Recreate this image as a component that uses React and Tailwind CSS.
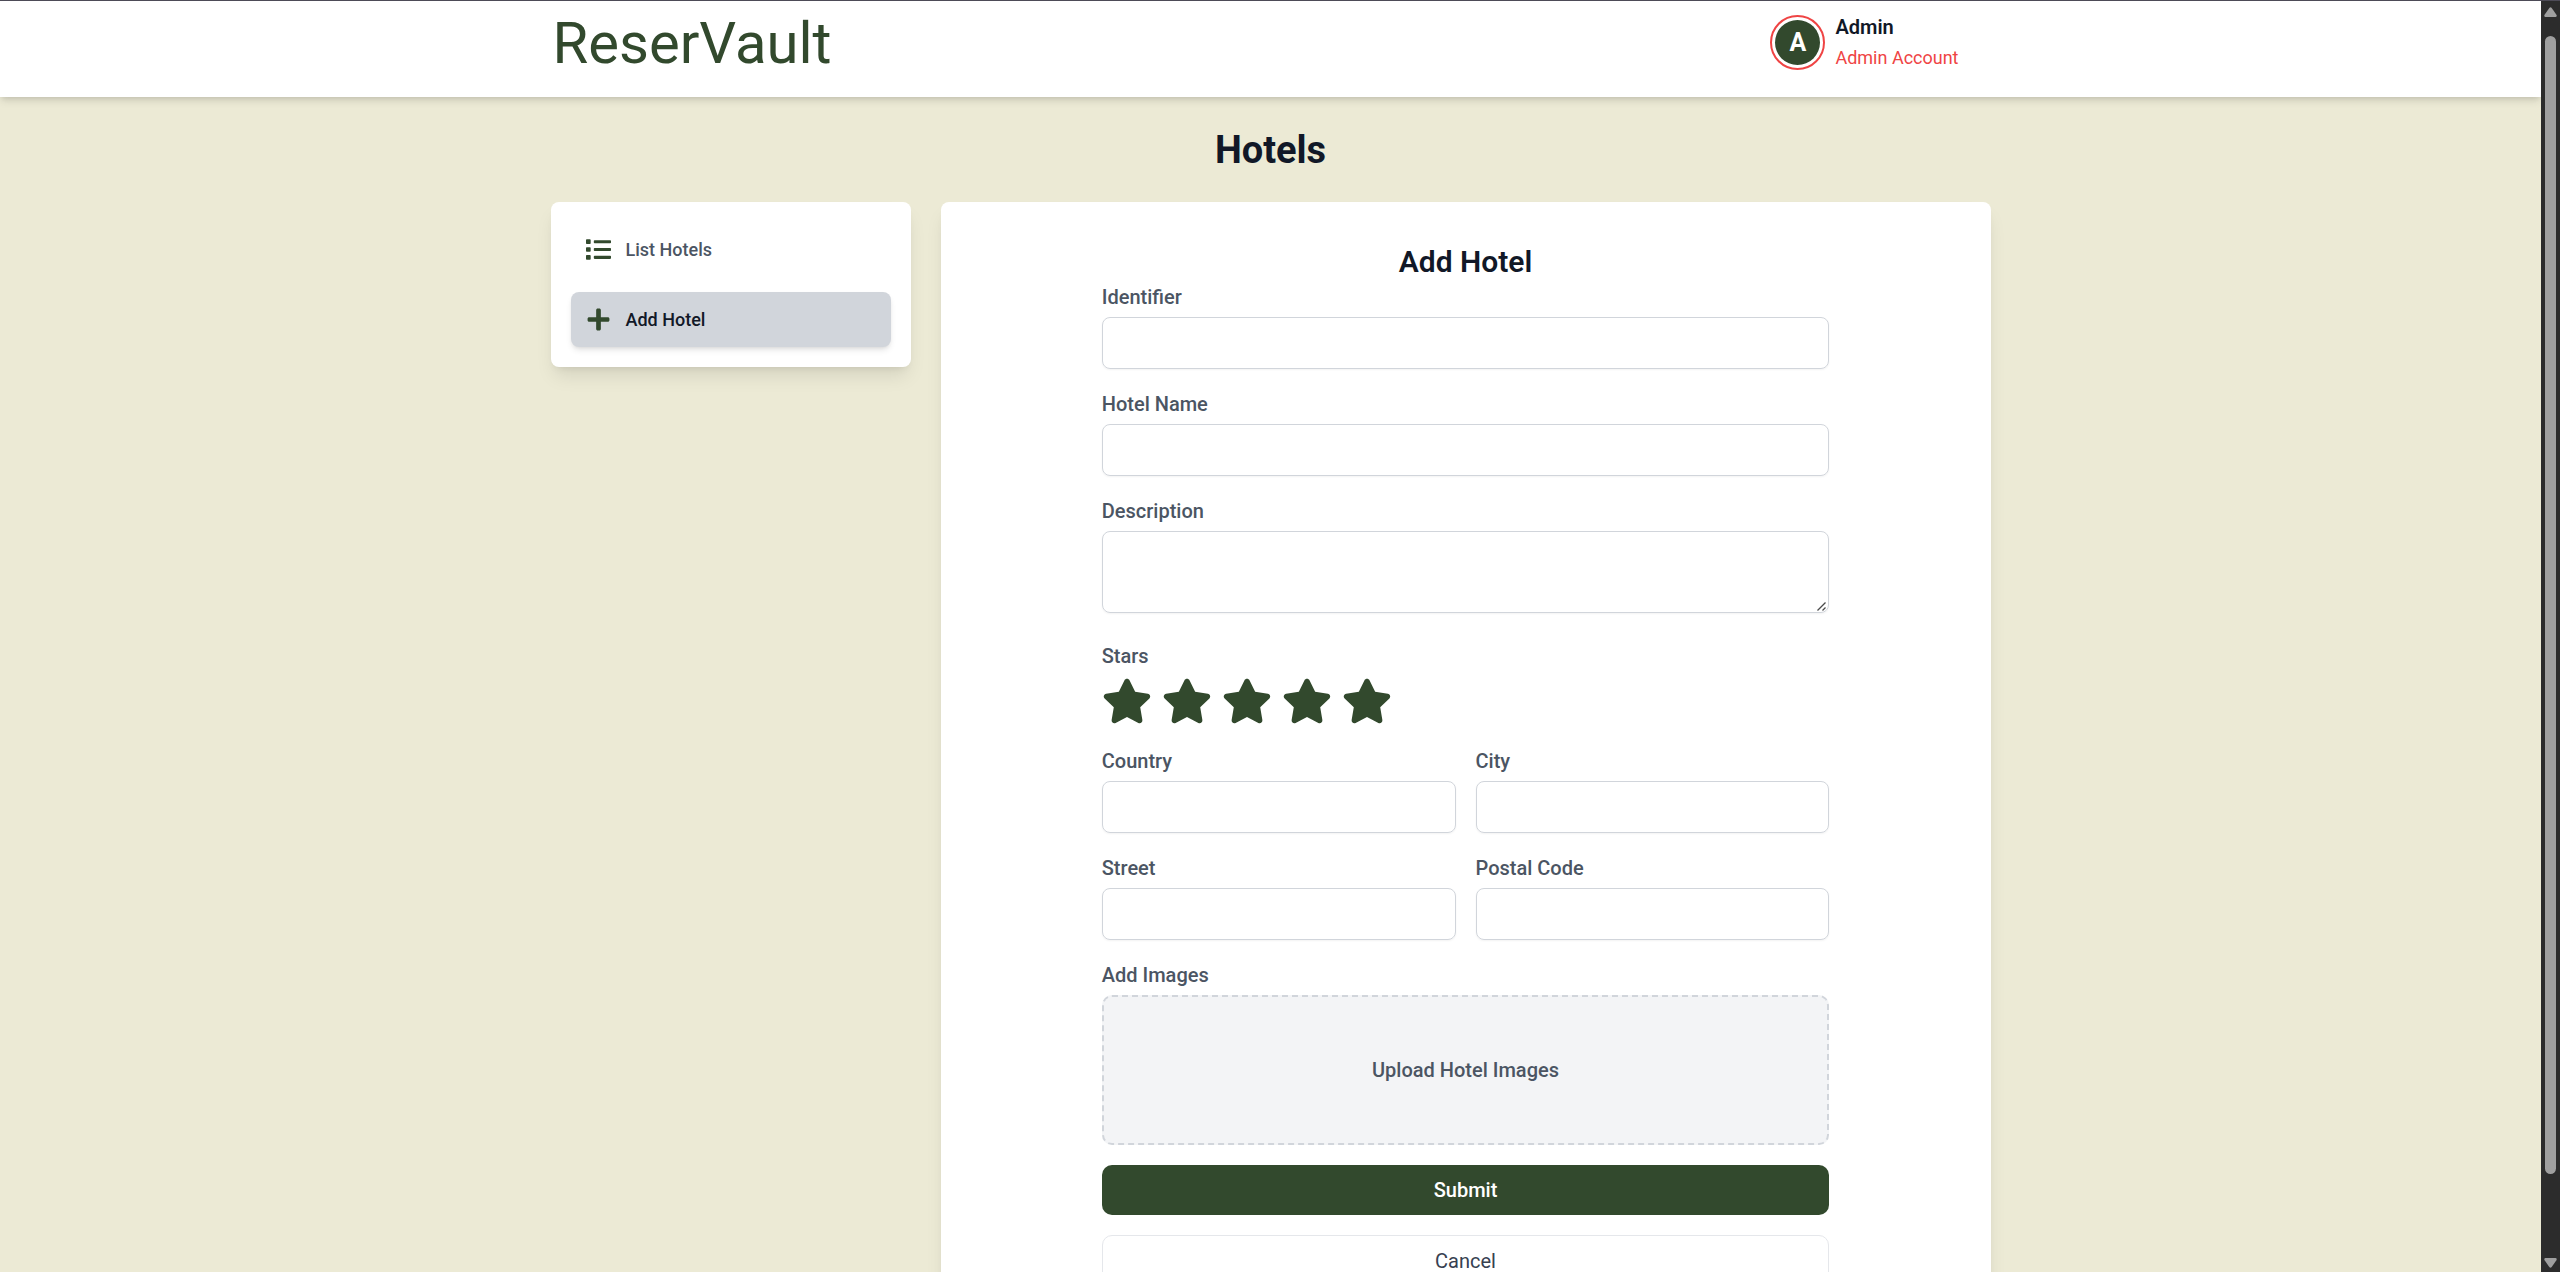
import { useState } from "react";
import { FaList, FaPlus, FaStar } from "react-icons/fa";

function Header() {
  return (
    <header className="relative bg-white shadow-[0_5px_8px_-1px_rgba(0,0,0,0.1),0_3px_5px_-2px_rgba(0,0,0,0.1)]">
      <div className="mx-auto flex max-w-[1440px] items-center justify-between pt-[3px] pb-4">
        <a href="#home" className="pt-0.5 pl-0.5 text-[58px] leading-[75px] text-[#32492d]">
          ReserVault
        </a>
        <button type="button" className="flex items-center gap-2.5 pr-8 text-left">
          <span className="rounded-full border-2 border-[#ef4444] p-[3px]">
            <span className="flex size-[45px] items-center justify-center rounded-full bg-[#32492d] text-[25px] font-bold text-white">
              A
            </span>
          </span>
          <span className="flex flex-col">
            <span className="text-[20px] leading-[30px] font-semibold text-[#111827]">Admin</span>
            <span className="text-[18px] leading-[32px] text-[#ef4444]">Admin Account</span>
          </span>
        </button>
      </div>
    </header>
  );
}

function Sidebar() {
  return (
    <nav className="flex w-1/4 shrink-0 flex-col gap-[15px] rounded-lg bg-white p-5 text-[18px] leading-[25px] font-medium shadow-[0_12px_19px_-4px_rgba(0,0,0,0.1),0_5px_8px_-5px_rgba(0,0,0,0.1)]">
      <a href="#list" className="flex items-center gap-[15px] rounded-lg p-[15px] text-[#4b5563]">
        <FaList className="size-[25px] text-[#32492d]" />
        List Hotels
      </a>
      <a
        href="#add"
        aria-current="page"
        className="flex items-center gap-[15px] rounded-lg bg-[#d1d5db] p-[15px] text-[#111827] shadow-md"
      >
        <FaPlus className="size-[25px] text-[#32492d]" />
        Add Hotel
      </a>
    </nav>
  );
}

function Field({ id, label, multiline }) {
  return (
    <div>
      <label htmlFor={id} className="mb-[5px] block">
        {label}
      </label>
      {multiline ? (
        <div className="relative mb-2">
          <textarea
            id={id}
            className="block h-[82px] w-full resize-none rounded-lg border border-[#d1d5db] px-4 py-2.5 shadow-xs"
          />
          <svg
            viewBox="0 0 9 9"
            className="pointer-events-none absolute right-[3px] bottom-0.5 size-[9px]"
            fill="none"
            stroke="#4a4a4a"
            strokeWidth="1.3"
            aria-hidden="true"
          >
            <path d="M0.5 8.5 L8.5 0.5 M5.5 8.5 L8.5 5.5" />
          </svg>
        </div>
      ) : (
        <input
          id={id}
          type="text"
          className="block h-[52px] w-full rounded-lg border border-[#d1d5db] px-4 shadow-xs"
        />
      )}
    </div>
  );
}

function Stars() {
  const [rating, setRating] = useState(5);
  return (
    <fieldset>
      <legend className="mb-[5px]">Stars</legend>
      <div className="flex gap-2.5">
        {[1, 2, 3, 4, 5].map((n) => (
          <button key={n} type="button" aria-label={`${n} stars`} onClick={() => setRating(n)}>
            <FaStar className={n <= rating ? "size-[50px] text-[#32492d]" : "size-[50px] text-[#d1d5db]"} />
          </button>
        ))}
      </div>
    </fieldset>
  );
}

function HotelForm() {
  return (
    <form className="mx-auto flex w-3/4 flex-col gap-5 text-[20px] leading-[30px] font-medium text-[#4b5563]">
      <Field id="identifier" label="Identifier" />
      <Field id="name" label="Hotel Name" />
      <Field id="description" label="Description" multiline />
      <Stars />
      <div className="grid grid-cols-2 gap-5">
        <Field id="country" label="Country" />
        <Field id="city" label="City" />
        <Field id="street" label="Street" />
        <Field id="postal" label="Postal Code" />
      </div>
      <div>
        <p className="mb-[5px]">Add Images</p>
        <label className="flex h-[150px] cursor-pointer items-center justify-center rounded-[10px] border-2 border-dashed border-[#d1d5db] bg-[#f3f4f6]">
          Upload Hotel Images
          <input type="file" multiple className="sr-only" />
        </label>
      </div>
      <button type="submit" className="h-[50px] rounded-[10px] bg-[#32492d] text-white">
        Submit
      </button>
      <button type="button" className="h-[52px] rounded-[10px] border border-[#e5e7eb] bg-white font-normal text-[#374151]">
        Cancel
      </button>
    </form>
  );
}

function ScrollTrack() {
  return (
    <div className="flex w-[19px] shrink-0 flex-col items-center justify-between bg-[#2c2c2c] pt-1.5 pb-1 text-[#9f9f9f]">
      <svg viewBox="0 0 13 10" className="h-2.5 w-[13px] shrink-0" fill="currentColor" aria-hidden="true">
        <path d="M5.3 1 Q6.5 -0.6 7.7 1 L12.6 8 Q13 10 11.5 10 H1.5 Q0 10 0.4 8 Z" />
      </svg>
      <div className="mt-[19px] mb-[84px] w-[11px] flex-1 rounded-full bg-[#9f9f9f]" />
      <svg viewBox="0 0 13 10" className="h-2.5 w-[13px] shrink-0 rotate-180" fill="currentColor" aria-hidden="true">
        <path d="M5.3 1 Q6.5 -0.6 7.7 1 L12.6 8 Q13 10 11.5 10 H1.5 Q0 10 0.4 8 Z" />
      </svg>
    </div>
  );
}

export default function App() {
  return (
    <div className="flex h-screen overflow-hidden border-t border-[#4d4b57] font-['Roboto',sans-serif]">
      <div className="flex-1 overflow-hidden bg-[#ecead5]">
        <Header />
        <main className="mx-auto max-w-[1440px] py-[30px]">
          <h1 className="mb-7 text-center text-[38px] leading-[47px] font-bold text-[#111827]">Hotels</h1>
          <div className="flex items-start gap-[30px]">
            <Sidebar />
            <section className="flex-1 rounded-lg bg-white p-10 shadow-[0_12px_19px_-4px_rgba(0,0,0,0.1),0_5px_8px_-5px_rgba(0,0,0,0.1)]">
              <h2 className="text-center text-[30px] leading-[40px] font-semibold text-[#111827]">Add Hotel</h2>
              <HotelForm />
            </section>
          </div>
        </main>
      </div>
      <ScrollTrack />
    </div>
  );
}
